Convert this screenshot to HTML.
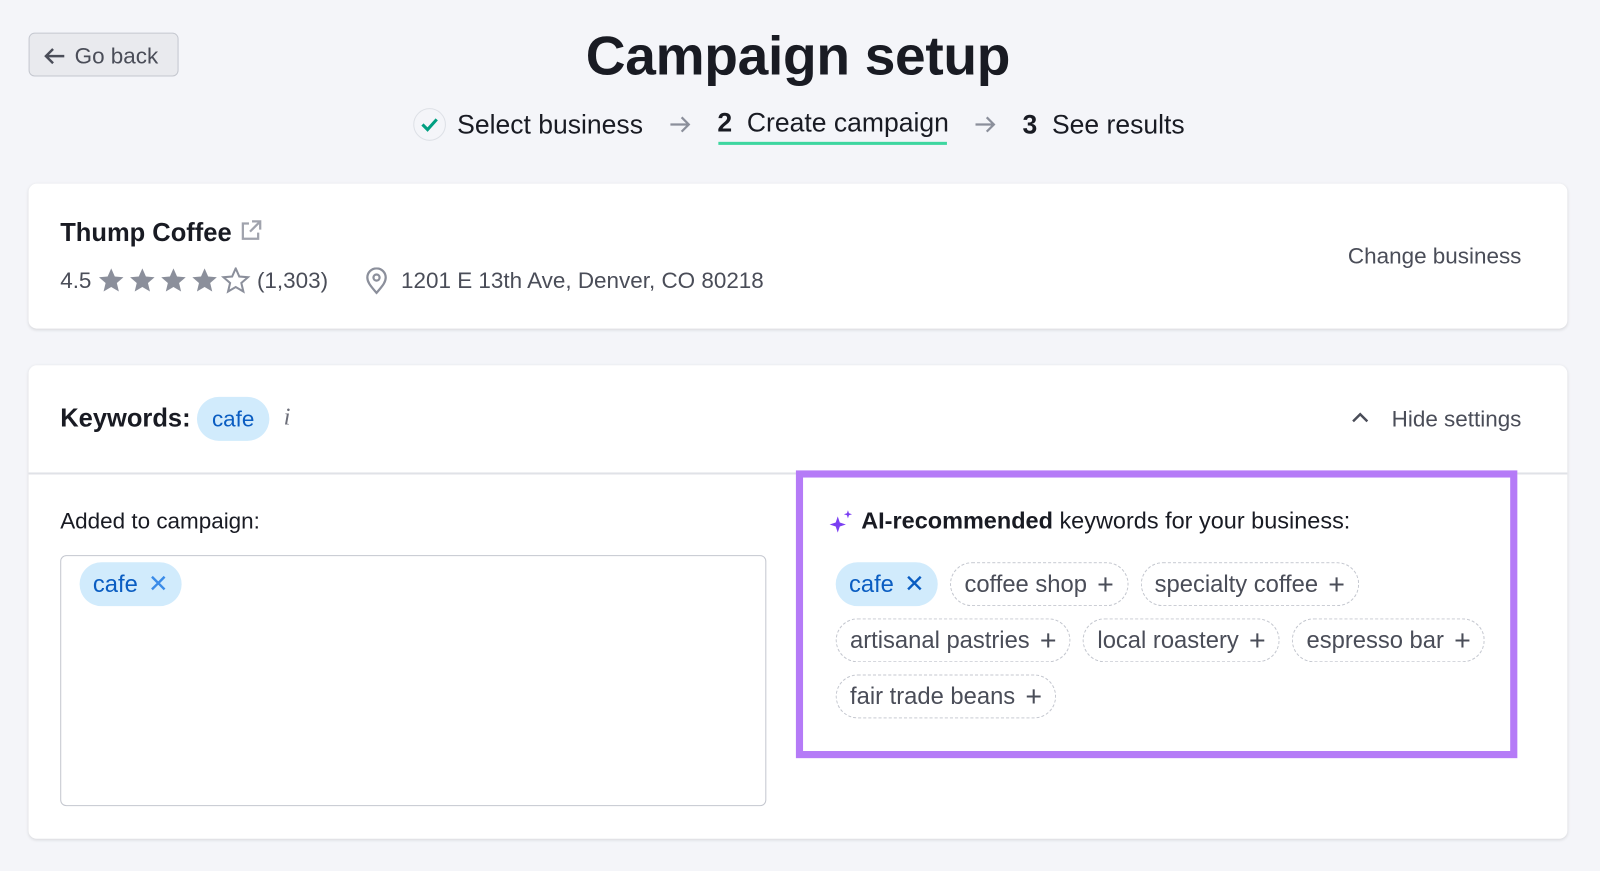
<!DOCTYPE html>
<html><head><meta charset="utf-8"><style>
*{box-sizing:border-box;margin:0;padding:0}
body{width:1600px;height:871px;background:#f4f5f9;font-family:"Liberation Sans",sans-serif;overflow:hidden;color:#191b23}
#w{position:relative;width:1568px;height:854px;transform:scale(1.0204);transform-origin:0 0}
.a{position:absolute;white-space:nowrap}
.card{position:absolute;background:#fff;border-radius:8px;box-shadow:0 1px 3px rgba(0,0,0,.12)}
.chip{display:inline-flex;align-items:center;height:43px;border:1.5px dashed #c4c7cf;border-radius:22px;padding:0 13px 0 13px;font-size:23.3px;color:#4a4d58;margin-right:12px}
.chip b{font-weight:normal;font-size:28px;margin-left:10px;color:#4a4d58}
.blue{background:#d1ebfc;border:none;color:#0a5dc2}
</style></head><body><div id="w">
<div class="a" style="left:28px;top:32px;width:147px;height:43px;border:1.5px solid #c4c7cf;border-radius:6px;background:#e9eaee;font-size:22px;color:#4a4d58;padding:9px 0 0 12px">
<svg width="26" height="20" viewBox="0 0 26 20" style="vertical-align:-3px"><path d="M22 10H4M11 3L4 10l7 7" stroke="#4a4d58" stroke-width="2.4" fill="none"/></svg> Go back</div>
<div class="a" style="left:0;width:1564px;text-align:center;top:24px;font-size:54px;font-weight:bold;letter-spacing:-0.3px">Campaign setup</div>
<div class="a" style="left:405px;top:106px;width:32px;height:32px;border:1.5px solid #dde0e6;border-radius:50%"><svg width="30" height="30" viewBox="0 0 30 30"><path d="M8 15l5 5 9-10" stroke="#009f81" stroke-width="3" fill="none"/></svg></div>
<div class="a" style="left:448px;top:107px;font-size:26px">Select business</div>
<svg class="a" style="left:655px;top:112px" width="24" height="20"><path d="M2 10h18M13 3l7 7-7 7" stroke="#8b8f9b" stroke-width="2.2" fill="none"/></svg>
<div class="a" style="left:703px;top:105px;font-size:26px"><b>2</b>&nbsp; Create campaign</div>
<div class="a" style="left:704px;top:139px;width:224px;height:3px;background:#3dd6a0"></div>
<svg class="a" style="left:954px;top:112px" width="24" height="20"><path d="M2 10h18M13 3l7 7-7 7" stroke="#8b8f9b" stroke-width="2.2" fill="none"/></svg>
<div class="a" style="left:1002px;top:107px;font-size:26px"><b>3</b>&nbsp; See results</div>

<div class="card" style="left:28px;top:180px;width:1508px;height:142px"></div>
<div class="a" style="left:59px;top:214px;font-size:25px;font-weight:bold">Thump Coffee <svg width="24" height="24" viewBox="0 0 24 24" style="vertical-align:-2px"><path d="M10 5H4v15h15v-6M13 3h8v8M21 3L11 13" stroke="#a0a3ad" stroke-width="2.2" fill="none"/></svg></div>
<div class="a" style="left:59px;top:262px;font-size:22px;color:#4a4d58;display:flex;align-items:center">4.5&nbsp;
<svg width="150" height="26" viewBox="0 0 150 26"><g fill="#8b8f9b"><path id="s" d="M13 1l3.5 8 8.5.7-6.5 5.6 2 8.4L13 19.3 5.5 23.7l2-8.4L1 9.7l8.5-.7z"/><use href="#s" x="30.5"/><use href="#s" x="61"/><use href="#s" x="91.5"/></g><use href="#s" x="122" fill="none" stroke="#8b8f9b" stroke-width="2"/></svg>&nbsp;(1,303)</div>
<svg class="a" style="left:357px;top:262px" width="24" height="28" viewBox="0 0 24 28"><path d="M12 25C5 17 3 14 3 10a9 9 0 0118 0c0 4-2 7-9 15z" stroke="#8b8f9b" stroke-width="2.2" fill="none"/><circle cx="12" cy="10" r="3" stroke="#8b8f9b" stroke-width="2.2" fill="none"/></svg>
<div class="a" style="left:393px;top:262px;font-size:22px;color:#4a4d58">1201 E 13th Ave, Denver, CO 80218</div>
<div class="a" style="right:77px;top:238px;font-size:22px;color:#4a4d58">Change business</div>

<div class="card" style="left:28px;top:358px;width:1508px;height:464px"></div>
<div class="a" style="left:28px;top:463px;width:1508px;height:1.5px;background:#e0e2e7"></div>
<div class="a" style="left:59px;top:396px;font-size:25px;font-weight:bold">Keywords:</div>
<div class="a" style="left:193px;top:389px;width:71px;height:43px;border-radius:22px;background:#d1ebfc;color:#0a5dc2;font-size:22px;text-align:center;line-height:43px">cafe</div>
<div class="a" style="left:278px;top:396px;font-size:24px;font-style:italic;color:#6c6e79;font-family:'Liberation Serif',serif">i</div>
<svg class="a" style="left:1323px;top:401px" width="20" height="16"><path d="M3 12l7-7 7 7" stroke="#4a4d58" stroke-width="2.4" fill="none"/></svg>
<div class="a" style="right:77px;top:398px;font-size:22px;color:#4a4d58">Hide settings</div>
<div class="a" style="left:59px;top:498px;font-size:22px">Added to campaign:</div>
<div class="a" style="left:59px;top:544px;width:692px;height:246px;border:1.5px solid #c4c7cf;border-radius:6px"></div>
<div class="a" style="left:78px;top:551px"><span class="chip blue">cafe <b style="color:#3a8be8;font-size:24px">✕</b></span></div>

<div class="a" style="left:780px;top:461px;width:707px;height:282px;border:7px solid #b57bf7"></div>
<svg class="a" style="left:812px;top:498px" width="26" height="26" viewBox="0 0 26 26"><path d="M9 8l2 6 6 2-6 2-2 6-2-6-6-2 6-2z" fill="#7b3ff2"/><path d="M19 2l1 3 3 1-3 1-1 3-1-3-3-1 3-1z" fill="#7b3ff2"/></svg>
<div class="a" style="left:844px;top:497px;font-size:23px"><b>AI-recommended</b> keywords for your business:</div>
<div class="a" style="left:819px;top:551px"><span class="chip blue">cafe <b style="color:#0a5dc2;font-size:24px">✕</b></span><span class="chip">coffee shop <b>+</b></span><span class="chip">specialty coffee <b>+</b></span></div>
<div class="a" style="left:819px;top:606px"><span class="chip">artisanal pastries <b>+</b></span><span class="chip">local roastery <b>+</b></span><span class="chip">espresso bar <b>+</b></span></div>
<div class="a" style="left:819px;top:661px"><span class="chip">fair trade beans <b>+</b></span></div>
</div></body></html>
